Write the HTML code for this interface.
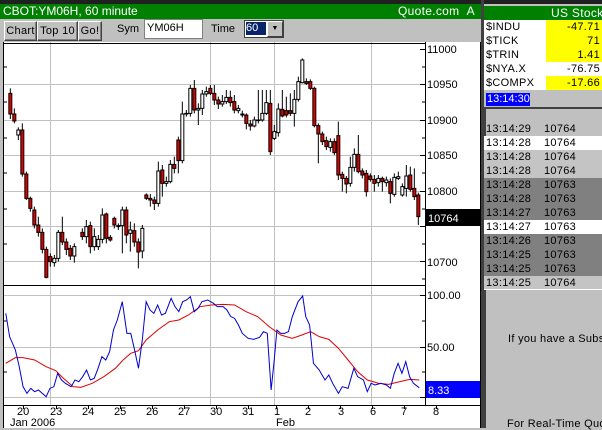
<!DOCTYPE html>
<html><head><meta charset="utf-8"><style>
*{margin:0;padding:0;box-sizing:border-box}
body{width:602px;height:428px;overflow:hidden;background:#c0c0c0;font-family:"Liberation Sans",sans-serif;font-size:11px;position:relative}
.a{position:absolute;white-space:nowrap}
.btn{position:absolute;top:21px;height:20px;background:#c0c0c0;border:1px solid;border-color:#fff #404040 #404040 #fff;box-shadow:inset -1px -1px #808080;font-size:11px;line-height:18px;text-align:center;letter-spacing:0.3px}
.row{position:absolute;left:484px;width:118px;height:14px;line-height:14px;font-size:11px;letter-spacing:0.3px}
.row span{position:absolute;left:60px}
.row b{font-weight:normal;position:absolute;left:2px}
</style></head><body>
<div class="a" style="left:0;top:0;width:602px;height:4px;background:#202020"></div>
<div class="a" style="left:0;top:4px;width:481px;height:15px;background:#008000;color:#fff;line-height:15px;padding-left:3px;font-size:12px;overflow:hidden">CBOT:YM06H, 60 minute</div>
<div class="a" style="left:398px;top:4px;color:#fff;line-height:15px;font-size:12px;letter-spacing:0.3px">Quote.com &nbsp;A</div>
<div class="btn" style="left:4px;width:33px">Chart</div>
<div class="btn" style="left:37px;width:41px">Top 10</div>
<div class="btn" style="left:78px;width:24px">Go!</div>
<div class="a" style="left:117px;top:23px">Sym</div>
<div class="a" style="left:144px;top:19px;width:59px;height:20px;background:#fff;border:1px solid #808080;padding-left:2px;line-height:17px">YM06H</div>
<div class="a" style="left:211px;top:23px">Time</div>
<div class="a" style="left:244px;top:20px;width:40px;height:18px;background:#fff;border:1px solid #404040"></div>
<div class="a" style="left:246px;top:22px;width:20px;height:13px;background:#0a246a;color:#fff;line-height:13px;outline:1px dotted #fff">60</div>
<div class="a" style="left:267px;top:21px;width:16px;height:16px;background:#c0c0c0;border:1px solid;border-color:#fff #404040 #404040 #fff;font-size:7px;text-align:center;line-height:14px">▼</div>

<svg class="a" style="left:0;top:42px" width="481" height="386" viewBox="0 42 481 386">
<rect x="3" y="42" width="478" height="386" fill="#fff"/>
<g stroke="#c0c0c0" stroke-width="1">
<path d="M3 84.5H425M3 120.5H425M3 155.5H425M3 191.5H425M3 226.5H425M3 261.5H425M3 295.5H425M3 347.5H425M3 397.5H425M50.5 42V405M210.5 42V405M274.5 42V405M371.5 42V405"/>
</g>
<g stroke="#000" stroke-width="1" fill="none">
<path d="M3.5 42V428M425.5 42V405M3 43.5H425M3 285.5H425M3 405.5H481M480.5 42V428"/>
<path d="M420 49.5h5M420 84.5h5M420 120.5h5M420 155.5h5M420 191.5h5M420 226.5h5M420 261.5h5M422 67h3M422 102h3M422 138h3M422 173h3M422 209h3M422 244h3M422 279h3M420 295.5h5M420 347.5h5M420 397.5h5M422 321h3M422 372h3M4 67h3M4 102h3M4 138h3M4 173h3M4 209h3M4 244h3M4 321h3M4 372h3M23.5 405v4M56.5 405v4M88.5 405v4M120.5 405v4M152.5 405v4M184.5 405v4M216.5 405v4M248.5 405v4M276.5 405v4M308.5 405v4M340.5 405v4M372.5 405v4M404.5 405v4M436.5 405v4"/>
</g>
<g transform="translate(0,40) scale(0.33333)">
<path stroke="#000" stroke-width="3" fill="none" d="M31 145V237M43 205V250M55 262V300M67 250V410M79 395V480M91 470V515M103 500V565M115 530V590M127 565V640M139 620V715M151 640V680M163 645V680M175 570V665M187 530V615M199 595V645M211 615V660M223 610V668M247 565V600M259 540V610M271 545V640M283 565V632M295 585V630M307 505V610M319 518V610M331 585V605M343 530V565M355 550V570M367 500V640M379 500V610M391 545V635M403 550V620M415 595V685M427 555V655M439 460V480M451 462V500M463 470V510M475 365V500M487 375V470M499 410V440M511 360V430M523 350V400M535 290V400M547 185V370M559 210V230M571 135V230M583 120V220M595 190V255M607 150V225M619 140V170M631 135V165M643 135V195M655 170V207M667 165V200M679 150V192M691 152V200M703 165V220M715 195V220M727 212V232M739 220V268M751 240V272M763 230V262M775 150V250M787 150V245M799 150V225M811 150V345M823 255V300M835 190V290M847 150V232M859 170V232M871 160V228M883 150V260M895 110V185M907 55V130M919 115V135M931 118V150M943 140V262M955 250V370M967 275V315M979 290V330M991 295V335M1003 295V345M1015 245V420M1027 395V455M1039 408V460M1051 350V440M1063 325V395M1075 285V400M1087 385V415M1099 390V470M1111 400V425M1123 405V455M1135 405V440M1147 410V455M1159 410V440M1171 415V490M1183 400V470M1195 395V420M1207 430V470M1219 375V470M1231 380V455M1243 385V480M1255 458V555"/>
<path fill="#e00000" stroke="#000" stroke-width="3" d="M26.5 160h9v62h-9zM38.5 222h9v21h-9zM62.5 270h9v132h-9zM74.5 402h9v73h-9zM86.5 475h9v30h-9zM98.5 510h9v45h-9zM110.5 555h9v22h-9zM122.5 577h9v51h-9zM134.5 628h9v84h-9zM146.5 650h9v15h-9zM182.5 577h9v29h-9zM194.5 606h9v22h-9zM206.5 625h9v23h-9zM242.5 577h9v13h-9zM266.5 557h9v63h-9zM314.5 522h9v73h-9zM326.5 592h9v8h-9zM338.5 535h9v20h-9zM374.5 510h9v75h-9zM398.5 572h9v34h-9zM410.5 606h9v30h-9zM434.5 465h9v10h-9zM446.5 475h9v5h-9zM458.5 480h9v10h-9zM482.5 390h9v40h-9zM518.5 373h9v12h-9zM530.5 300h9v62h-9zM578.5 145h9v65h-9zM626.5 145h9v15h-9zM638.5 160h9v20h-9zM650.5 180h9v12h-9zM686.5 172h9v16h-9zM698.5 185h9v25h-9zM722.5 222h9v3h-9zM734.5 225h9v25h-9zM746.5 252h9v6h-9zM806.5 190h9v145h-9zM842.5 208h9v20h-9zM854.5 212h9v13h-9zM866.5 212h9v8h-9zM914.5 125h9v5h-9zM926.5 125h9v20h-9zM938.5 145h9v112h-9zM950.5 257h9v25h-9zM962.5 282h9v23h-9zM974.5 302h9v18h-9zM998.5 305h9v33h-9zM1010.5 287h9v118h-9zM1022.5 403h9v12h-9zM1034.5 415h9v17h-9zM1070.5 343h9v52h-9zM1082.5 393h9v12h-9zM1094.5 400h9v55h-9zM1106.5 408h9v10h-9zM1118.5 418h9v12h-9zM1142.5 415h9v10h-9zM1166.5 425h9v35h-9zM1226.5 405h9v43h-9zM1238.5 445h9v25h-9zM1250.5 465h9v65h-9z"/>
<path fill="#fff" stroke="#000" stroke-width="3" d="M50.5 270h9v15h-9zM158.5 655h9v13h-9zM170.5 577h9v78h-9zM218.5 620h9v28h-9zM254.5 560h9v30h-9zM278.5 590h9v30h-9zM290.5 598h9v22h-9zM302.5 525h9v73h-9zM350.5 557h9v3h-9zM362.5 510h9v47h-9zM386.5 570h9v10h-9zM422.5 565h9v68h-9zM470.5 393h9v97h-9zM494.5 425h9v5h-9zM506.5 373h9v52h-9zM542.5 222h9v140h-9zM554.5 220h9v2h-9zM566.5 145h9v75h-9zM590.5 205h9v5h-9zM602.5 162h9v43h-9zM614.5 155h9v7h-9zM662.5 185h9v7h-9zM674.5 172h9v13h-9zM710.5 205h9v7h-9zM758.5 240h9v18h-9zM770.5 240h9v2h-9zM782.5 220h9v20h-9zM794.5 188h9v32h-9zM818.5 275h9v20h-9zM830.5 207h9v71h-9zM878.5 178h9v42h-9zM890.5 125h9v53h-9zM902.5 60h9v68h-9zM986.5 305h9v17h-9zM1046.5 382h9v48h-9zM1058.5 343h9v39h-9zM1130.5 415h9v13h-9zM1154.5 420h9v8h-9zM1178.5 412h9v51h-9zM1190.5 410h9v5h-9zM1202.5 440h9v25h-9zM1214.5 408h9v37h-9z"/>
</g>
<g transform="translate(0,280) scale(0.3846,0.33333)" fill="none">
<polyline vector-effect="non-scaling-stroke" stroke="#e00000" stroke-width="1" points="15,250 40,233 60,233 90,240 120,260 145,272 165,295 190,320 210,322 240,310 270,290 300,265 320,240 340,220 360,212 380,180 410,150 440,125 465,120 490,105 520,80 550,75 580,73 610,75 640,95 670,110 700,140 730,165 760,175 785,165 808,155 830,170 855,178 880,205 905,240 930,275 955,300 985,310 1010,313 1040,305 1065,298 1090,300"/>
<polyline vector-effect="non-scaling-stroke" stroke="#0000d0" stroke-width="1" points="15,100 25,170 40,210 50,260 60,320 70,340 80,325 90,335 100,330 110,340 120,350 130,325 140,320 150,280 160,300 170,310 185,320 195,300 205,305 215,290 225,270 235,300 245,295 255,265 265,230 275,240 285,215 295,150 305,120 318,65 330,160 340,160 350,210 360,265 370,180 380,65 390,90 400,100 410,75 420,105 430,100 445,55 455,80 465,95 475,65 485,60 495,50 505,95 515,85 525,65 540,60 555,70 565,80 580,80 590,90 600,110 610,115 620,135 630,160 645,175 660,178 675,172 685,155 695,160 705,330 713,240 720,150 730,160 740,160 750,155 760,110 775,65 787,48 795,110 805,135 815,250 830,270 845,300 855,285 865,310 880,340 890,320 905,325 920,265 930,290 945,300 955,335 965,310 975,315 990,310 1005,315 1015,325 1025,280 1035,250 1045,280 1055,245 1065,290 1075,310 1090,323"/>
</g>
<g font-family="Liberation Sans" font-size="11" fill="#000">
<text x="427" y="53">11000</text><text x="427" y="88">10950</text><text x="427" y="124">10900</text><text x="427" y="159">10850</text><text x="427" y="195">10800</text><text x="427" y="266">10700</text><text x="427" y="299">100.00</text><text x="427" y="351">50.00</text>
<text x="17" y="415">20</text><text x="50" y="415">23</text><text x="82" y="415">24</text><text x="114" y="415">25</text><text x="146" y="415">26</text><text x="178" y="415">27</text><text x="210" y="415">30</text><text x="242" y="415">31</text><text x="274" y="415">1</text><text x="305" y="415">2</text><text x="338" y="415">3</text><text x="370" y="415">6</text><text x="401" y="415">7</text><text x="433" y="415">8</text>
<text x="10" y="426">Jan 2006</text><text x="276" y="426">Feb</text>
</g>
<rect x="426" y="209" width="54" height="17" fill="#000"/><text x="428" y="222" font-family="Liberation Sans" font-size="11" fill="#fff">10764</text>
<rect x="426" y="381" width="54" height="17" fill="#0000ff"/><text x="428" y="394" font-family="Liberation Sans" font-size="11" fill="#fff">8.33</text>
</svg>

<div class="a" style="left:481px;top:0;width:3px;height:428px;background:#404040"></div>
<div class="a" style="left:484px;top:6px;width:118px;height:14px;background:#008000"></div>
<div class="a" style="left:551px;top:6px;color:#fff;line-height:14px;font-size:12px;letter-spacing:0.3px">US Stock M</div>
<div class="row" style="top:20px;background:#fff"><b>$INDU</b><span style="background:#ffff00;left:62px;width:56px;text-align:right;padding-right:2px">-47.71</span></div>
<div class="row" style="top:34px;background:#fff"><b>$TICK</b><span style="background:#ffff00;left:62px;width:56px;text-align:right;padding-right:2px">71</span></div>
<div class="row" style="top:48px;background:#fff"><b>$TRIN</b><span style="background:#ffff00;left:62px;width:56px;text-align:right;padding-right:2px">1.41</span></div>
<div class="row" style="top:62px;background:#fff"><b>$NYA.X</b><span style="left:62px;width:56px;text-align:right;padding-right:2px">-76.75</span></div>
<div class="row" style="top:76px;background:#fff"><b>$COMPX</b><span style="background:#ffff00;left:62px;width:56px;text-align:right;padding-right:2px">-17.66</span></div>
<div class="a" style="left:486px;top:93px;width:44px;height:13px;background:#0000ff;color:#fff;line-height:13px;padding-left:1px">13:14:30</div>
<div class="a" style="left:484px;top:107px;width:118px;height:2px;background:#404040"></div>
<div class="a" style="left:484px;top:107px;width:2px;height:321px;background:#404040"></div>
<div class="row" style="top:122px"><b>13:14:29</b><span>10764</span></div>
<div class="row" style="top:136px;background:#fff"><b>13:14:28</b><span>10764</span></div>
<div class="row" style="top:150px;background:#c4c4c4"><b>13:14:28</b><span>10764</span></div>
<div class="row" style="top:164px;background:#c4c4c4"><b>13:14:28</b><span>10764</span></div>
<div class="row" style="top:178px;background:#808080"><b>13:14:28</b><span>10763</span></div>
<div class="row" style="top:192px;background:#808080"><b>13:14:28</b><span>10763</span></div>
<div class="row" style="top:206px;background:#808080"><b>13:14:27</b><span>10763</span></div>
<div class="row" style="top:220px;background:#fff"><b>13:14:27</b><span>10763</span></div>
<div class="row" style="top:234px;background:#808080"><b>13:14:26</b><span>10763</span></div>
<div class="row" style="top:248px;background:#808080"><b>13:14:25</b><span>10763</span></div>
<div class="row" style="top:262px;background:#808080"><b>13:14:25</b><span>10763</span></div>
<div class="row" style="top:276px;background:#c4c4c4;border-bottom:1px solid #fff"><b>13:14:25</b><span>10764</span></div>
<div class="a" style="left:508px;top:333px;letter-spacing:0.3px">If you have a Subscr</div>
<div class="a" style="left:507px;top:418px;letter-spacing:0.3px">For Real-Time Quot</div>
</body></html>
